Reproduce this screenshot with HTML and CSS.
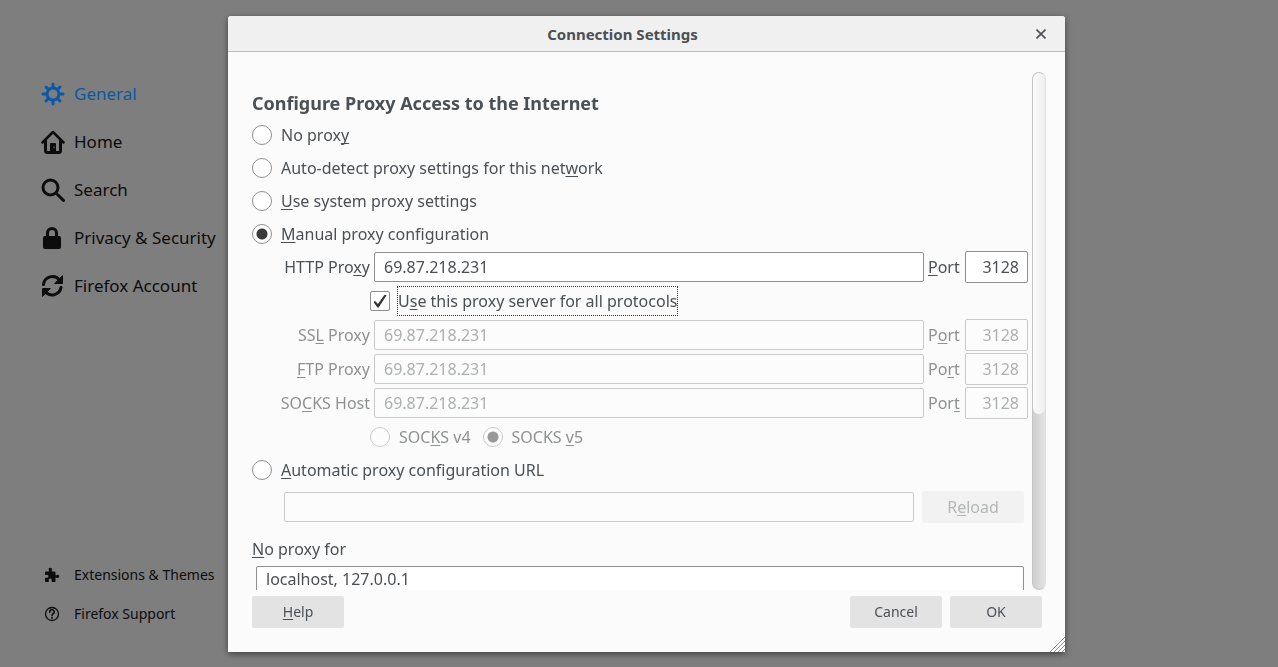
FILE: index.html
```
<!DOCTYPE html>
<html lang="en">
<head>
    <meta charset="UTF-8">
    <title>Connection Settings</title>
    <link rel="stylesheet" href="styles.css">
</head>
<body>
<div class="sidebar">
    <nav class="categories">
        <a href="#general" class="category selected">
            <svg class="icon" viewBox="0 0 24 24" fill="none" stroke="currentColor">
                <circle cx="12" cy="12" r="6" stroke-width="3"/>
                <g stroke-width="3" stroke-linecap="round">
                    <path d="M12 5V2M12 19v3M5 12H2M19 12h3M7 7L5 5M17 7l2-2M7 17l-2 2M17 17l2 2"/>
                </g>
            </svg>
            <span>General</span>
        </a>
        <a href="#home" class="category">
            <svg class="icon" viewBox="0 0 24 24" fill="none" stroke="currentColor" stroke-linecap="round" stroke-linejoin="round">
                <path d="M1.500 12.500L12 2l10.500 10.500" stroke-width="2.500"/>
                <path d="M4.500 11v9.500q0 2 2 2h11q2 0 2-2V11" stroke-width="3"/>
                <path d="M9 22v-8q0-1 1-1h4q1 0 1 1v8z" fill="currentColor" stroke="none"/>
                <path d="M13 17v1" stroke="#7e7e7e" stroke-width="1"/>
            </svg>
            <span>Home</span>
        </a>
        <a href="#search" class="category">
            <svg class="icon" viewBox="0 0 24 24" fill="none" stroke="currentColor" stroke-linecap="round">
                <circle cx="9.500" cy="9.500" r="7.500" stroke-width="3"/>
                <path d="M15 15l7.500 7.500" stroke-width="3"/>
            </svg>
            <span>Search</span>
        </a>
        <a href="#privacy" class="category">
            <svg class="icon" viewBox="0 0 24 24">
                <rect x="2" y="10" width="18" height="13" rx="2" fill="currentColor"/>
                <path d="M6.500 11V7a4.500 4.500 0 0 1 9 0v4" fill="none" stroke="currentColor" stroke-width="3"/>
            </svg>
            <span>Privacy &amp; Security</span>
        </a>
        <a href="#account" class="category">
            <svg class="icon" viewBox="0 0 24 24" fill="none" stroke="currentColor" stroke-width="3" stroke-linecap="round">
                <path d="M2.500 10.500A9 9 0 0 1 18.500 6M20 13.500A9 9 0 0 1 4.500 18"/>
                <path d="M21.500 2v7.500h-7.500zM1.500 22v-7.500H9z" fill="currentColor" stroke-width="1" stroke-linejoin="round"/>
            </svg>
            <span>Firefox Account</span>
        </a>
    </nav>
    <div class="sidebar-footer">
        <a href="#extensions" class="footer-link">
            <svg class="small-icon" viewBox="0 0 16 16" fill="currentColor">
                <path d="M1 5.500Q1 4.500 2 4.500H4.500Q5.500 4.500 5 3.500Q4 1 6 .700Q8.500.700 7.800 3Q7.200 4.500 8.500 4.500H10.500Q11.500 4.500 11.500 5.500V7.500Q11.500 8.700 12.700 8Q15.300 7.200 15.300 9.300Q15.200 11.500 12.700 10.700Q11.500 10 11.500 11.200V14Q11.500 15 10.500 15H8.500Q7.300 15 7.600 13.800Q8.300 11.700 6.300 11.600Q4.200 11.700 4.900 13.800Q5.200 15 4.200 15H2Q1 15 1 14V11.500Q1 10.500 2.200 10.700Q4.500 11.300 4.500 9.200Q4.300 7.400 2.200 8Q1 8.200 1 7.500Z"/>
            </svg>
            <span>Extensions &amp; Themes</span>
        </a>
        <a href="#support" class="footer-link">
            <svg class="small-icon" viewBox="0 0 16 16" fill="none" stroke="currentColor">
                <circle cx="8" cy="8" r="6.500" stroke-width="1.300"/>
                <path d="M5.800 6.200A2.200 2.200 0 1 1 8.800 8Q8 8.400 8 9.400" stroke-width="1.600" stroke-linecap="round"/>
                <circle cx="8" cy="11.800" r="1" fill="currentColor" stroke="none"/>
            </svg>
            <span>Firefox Support</span>
        </a>
    </div>
</div>

<div class="overlay">
    <div class="dialog" role="dialog" aria-labelledby="dialog-title">
        <div class="titlebar">
            <h1 class="title" id="dialog-title">Connection Settings</h1>
            <button type="button" class="close" aria-label="Close">
                <svg class="close-icon" viewBox="0 0 10 10" fill="none" stroke="currentColor" stroke-width="1.600">
                    <path d="M.500.500l9 9M9.500.500l-9 9"/>
                </svg>
            </button>
        </div>

        <form class="content">
            <div class="scroll-area">
                <div class="settings">
                    <h2 class="heading">Configure Proxy Access to the Internet</h2>

                    <label class="option"><input type="radio" name="proxy" class="radio"><span>No prox<u>y</u></span></label>
                    <label class="option"><input type="radio" name="proxy" class="radio"><span>Auto-detect proxy settings for this net<u>w</u>ork</span></label>
                    <label class="option"><input type="radio" name="proxy" class="radio"><span><u>U</u>se system proxy settings</span></label>
                    <label class="option"><input type="radio" name="proxy" class="radio" checked><span><u>M</u>anual proxy configuration</span></label>

                    <div class="proxy-grid">
                        <label class="host-label" for="http">HTTP Pro<u>x</u>y</label>
                        <input type="text" class="field host" id="http" value="69.87.218.231">
                        <label class="port-label" for="http-port"><u>P</u>ort</label>
                        <input type="text" class="field port" id="http-port" value="3128">

                        <label class="indented share"><input type="checkbox" class="checkbox" checked><span class="focused">U<u>s</u>e this proxy server for all protocols</span></label>

                        <label class="host-label disabled" for="ssl">SS<u>L</u> Proxy</label>
                        <input type="text" class="field host" id="ssl" value="69.87.218.231" disabled>
                        <label class="port-label disabled" for="ssl-port">P<u>o</u>rt</label>
                        <input type="text" class="field port" id="ssl-port" value="3128" disabled>

                        <label class="host-label disabled" for="ftp"><u>F</u>TP Proxy</label>
                        <input type="text" class="field host" id="ftp" value="69.87.218.231" disabled>
                        <label class="port-label disabled" for="ftp-port">Po<u>r</u>t</label>
                        <input type="text" class="field port" id="ftp-port" value="3128" disabled>

                        <label class="host-label disabled" for="socks">SO<u>C</u>KS Host</label>
                        <input type="text" class="field host" id="socks" value="69.87.218.231" disabled>
                        <label class="port-label disabled" for="socks-port">Por<u>t</u></label>
                        <input type="text" class="field port" id="socks-port" value="3128" disabled>

                        <div class="indented versions disabled">
                            <label class="version"><input type="radio" name="socks" class="radio" disabled><span>SOC<u>K</u>S v4</span></label>
                            <label class="version"><input type="radio" name="socks" class="radio" checked disabled><span>SOCKS <u>v</u>5</span></label>
                        </div>
                    </div>

                    <label class="option"><input type="radio" name="proxy" class="radio"><span><u>A</u>utomatic proxy configuration URL</span></label>
                    <div class="url-row">
                        <input type="text" class="field url" aria-label="Automatic proxy configuration URL" disabled>
                        <button type="button" class="button reload" disabled>R<u>e</u>load</button>
                    </div>

                    <label class="exceptions-label" for="exceptions"><u>N</u>o proxy for</label>
                    <textarea class="exceptions" id="exceptions">localhost, 127.0.0.1</textarea>
                </div>
                <div class="scrollbar">
                    <div class="thumb"></div>
                </div>
            </div>

            <div class="buttons">
                <button type="button" class="button help"><u>H</u>elp</button>
                <button type="button" class="button">Cancel</button>
                <button type="button" class="button">OK</button>
            </div>
        </form>
        <svg class="resizer" viewBox="0 0 16 16" fill="none" stroke="#8c8c8c">
            <path d="M1 16L16 1M5 16L16 5M9 16l7-7M13 16l3-3"/>
        </svg>
    </div>
</div>
</body>
</html>
```
FILE: styles.css
```
* {
    box-sizing: border-box;
    margin: 0;
    padding: 0;
}

body {
    min-height: 100vh;
    background: #7e7e7e;
    color: #4b5055;
    font: 16px/24px "Noto Sans", sans-serif;
    overflow: hidden;
}

input, button, textarea {
    font: inherit;
    color: inherit;
}

u {
    text-decoration: underline 1px;
    text-decoration-skip-ink: none;
    text-underline-offset: 2px;
}

/* sidebar */
.sidebar {
    display: flex;
    flex-direction: column;
    justify-content: space-between;
    width: 228px;
    height: 100vh;
    padding: 70px 0 34px 41px;
}

.category, .footer-link {
    display: flex;
    align-items: center;
    color: #0c0c0d;
    text-decoration: none;
    white-space: nowrap;
}

.category {
    gap: 9px;
    height: 48px;
    font-size: 17px;
}

.category.selected {
    color: #0b58a8;
}

.icon {
    width: 24px;
    height: 24px;
}

.footer-link {
    gap: 14px;
    height: 39px;
    padding-left: 3px;
    font-size: 14px;
}

.small-icon {
    width: 16px;
    height: 16px;
}

/* dialog */
.overlay {
    position: fixed;
    inset: 0;
    display: flex;
    padding: 16px 213px 15px 228px;
}

.dialog {
    position: relative;
    display: flex;
    flex: 1;
    flex-direction: column;
    background: #fbfbfb;
    border-radius: 3px 3px 0 0;
    box-shadow: 0 2px 6px rgba(0, 0, 0, 0.5);
}

.titlebar {
    display: grid;
    grid-template-columns: 1fr 48px;
    align-items: center;
    height: 36px;
    background: #f0f0f1;
    border-bottom: 1px solid #bfbfbf;
    border-radius: 3px 3px 0 0;
}

.title {
    font-size: 15px;
    text-align: center;
}

.close {
    display: flex;
    align-items: center;
    justify-content: center;
    height: 35px;
    border: 0;
    background: none;
}

.close-icon {
    width: 10px;
    height: 10px;
}

.content {
    display: flex;
    flex: 1;
    flex-direction: column;
    min-height: 0;
    padding: 20px 19px 24px 24px;
}

.scroll-area {
    display: flex;
    flex: 1;
    gap: 4px;
    min-height: 0;
}

.settings {
    flex: 1;
    padding-top: 19px;
    overflow: hidden;
}

.heading {
    margin-bottom: 3px;
    font-size: 18px;
    line-height: 24px;
}

.option {
    display: flex;
    align-items: center;
    gap: 9px;
    height: 33px;
}

.radio, .checkbox {
    appearance: none;
    flex: none;
    width: 20px;
    height: 20px;
    border: 1px solid #8f8f8f;
    background: #fff;
}

.radio {
    border-radius: 50%;
}

.radio:checked {
    background: radial-gradient(circle, #3a3a3a 5px, #fff 6px);
}

.radio:disabled {
    border-color: #c9c9c9;
    background: #fcfcfc;
}

.radio:checked:disabled {
    background: radial-gradient(circle, #999 5px, #fcfcfc 6px);
}

.checkbox {
    display: flex;
    align-items: center;
    justify-content: center;
    border-radius: 2px;
}

.checkbox:checked::before {
    content: "";
    width: 13px;
    height: 13px;
    background: #333;
    clip-path: polygon(0 58%, 12% 50%, 34% 74%, 86% 0, 100% 6%, 40% 100%, 30% 100%);
}

.proxy-grid {
    display: grid;
    grid-template-columns: 118px 1fr 37px 63px;
    grid-auto-rows: 32px;
    row-gap: 2px;
    align-items: center;
    margin-top: 1px;
}

.host-label {
    text-align: right;
}

.field {
    min-width: 0;
    height: 30px;
    padding: 0 9px;
    border: 1px solid #8f8f8f;
    border-radius: 2px;
    background: #fff;
}

.field:disabled {
    border-color: #c9c9c9;
    background: #fcfcfc;
    color: #adb0b1;
}

.host {
    margin: 0 4px;
}

.port {
    height: 32px;
    padding: 0 8px;
    text-align: right;
}

.disabled {
    color: #8f9191;
}

.indented {
    grid-column: 2 / -1;
    display: flex;
    align-items: center;
}

.share {
    gap: 8px;
}

.focused {
    padding: 2px 0;
    outline: 1px dotted #333;
}

.versions {
    gap: 12px;
}

.version {
    display: flex;
    align-items: center;
    gap: 9px;
}

.url-row {
    display: flex;
    align-items: center;
    gap: 8px;
    margin: 5px 4px 14px 32px;
}

.url {
    flex: 1;
}

.button {
    width: 92px;
    height: 32px;
    border: 0;
    border-radius: 2px;
    background: #e3e3e3;
    font-size: 14px;
}

.reload {
    width: 102px;
    background: #f2f2f2;
    color: #b3b6b7;
    font-size: 16px;
}

.exceptions-label {
    display: block;
    margin-bottom: 5px;
}

.exceptions {
    display: block;
    width: calc(100% - 8px);
    height: 64px;
    margin: 0 4px;
    padding: 0 9px;
    border: 1px solid #8f8f8f;
    border-radius: 2px;
    background: #fff;
    resize: none;
}

.scrollbar {
    width: 14px;
    border: 1px solid #c4c4c4;
    border-right-color: #e0e0e0;
    border-radius: 7px;
    background: linear-gradient(to right, #cfcfcf, #e3e3e3);
}

.thumb {
    height: 66%;
    border-radius: 6px;
    background: linear-gradient(to right, #fbfbfb, #eee);
}

.buttons {
    display: flex;
    gap: 8px;
    margin: 6px 4px 0 0;
}

.help {
    margin-right: auto;
}

.resizer {
    position: absolute;
    right: 0;
    bottom: 0;
    width: 16px;
    height: 16px;
}
```
